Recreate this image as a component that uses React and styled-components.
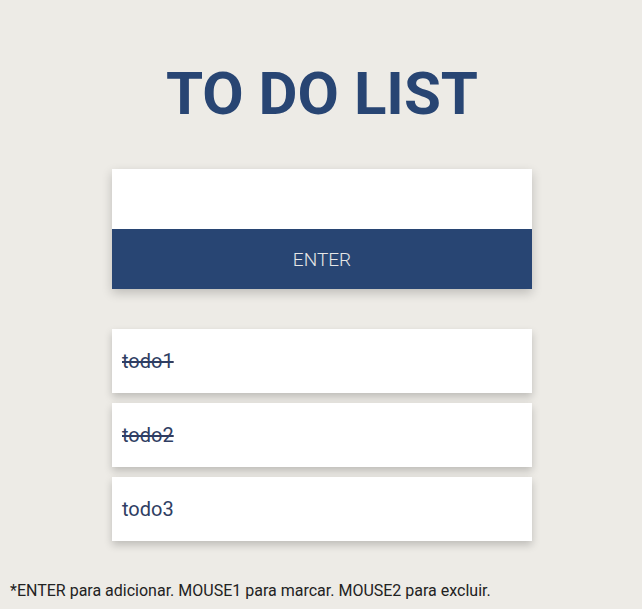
import React from 'react';
import styled, { createGlobalStyle } from 'styled-components';

const GlobalStyle = createGlobalStyle`
    body {
        margin: 0;
        background-color: #edebe6;
        font-family: Roboto, 'Liberation Sans', sans-serif;
    }
`;

const todos = [
    { text: 'todo1', done: true },
    { text: 'todo2', done: true },
    { text: 'todo3', done: false },
];

function App () {
    return (
        <Page>
            <GlobalStyle />
            <Title>TO DO LIST</Title>
            <Form>
                <Input type="text" />
                <Button>ENTER</Button>
            </Form>
            <List>
                {todos.map((t) => (
                    <Item key={t.text} $done={t.done}>{t.text}</Item>
                ))}
            </List>
            <Help>*ENTER para adicionar. MOUSE1 para marcar. MOUSE2 para excluir.</Help>
        </Page>
    );
}

const Page = styled.div`
    display: flex;
    flex-direction: column;
    align-items: center;
    padding-left: 2px;
    min-height: 609px;
`;

const Title = styled.h1`
    margin: 59px 0 40px;
    font-size: 60px;
    font-weight: 700;
    line-height: 70px;
    color: #284573;
`;

const Form = styled.div`
    width: 420px;
    display: flex;
    flex-direction: column;
    box-shadow: 0 4px 10px rgba(0, 0, 0, 0.2);
`;

const Input = styled.input`
    height: 60px;
    border: none;
    outline: none;
    padding: 0 10px;
    box-sizing: border-box;
    font-family: inherit;
    font-size: 20px;
    background: #fff;
`;

const Button = styled.div`
    height: 60px;
    display: flex;
    align-items: center;
    justify-content: center;
    background-color: #284573;
    color: #e6e6e6;
    font-size: 19px;
    font-weight: 300;
`;

const List = styled.div`
    width: 420px;
    margin-top: 40px;
    display: flex;
    flex-direction: column;
    gap: 10px;
`;

const Item = styled.div`
    height: 64px;
    display: flex;
    align-items: center;
    padding: 0 10px;
    background: #fff;
    color: #2f3e63;
    font-size: 20px;
    text-decoration: ${(p) => (p.$done ? 'line-through' : 'none')};
    box-shadow: 0 4px 8px rgba(0, 0, 0, 0.2);
`;

const Help = styled.p`
    align-self: flex-start;
    margin: 40px 0 0 8px;
    font-size: 16px;
    color: #222;
`;

export default App;
